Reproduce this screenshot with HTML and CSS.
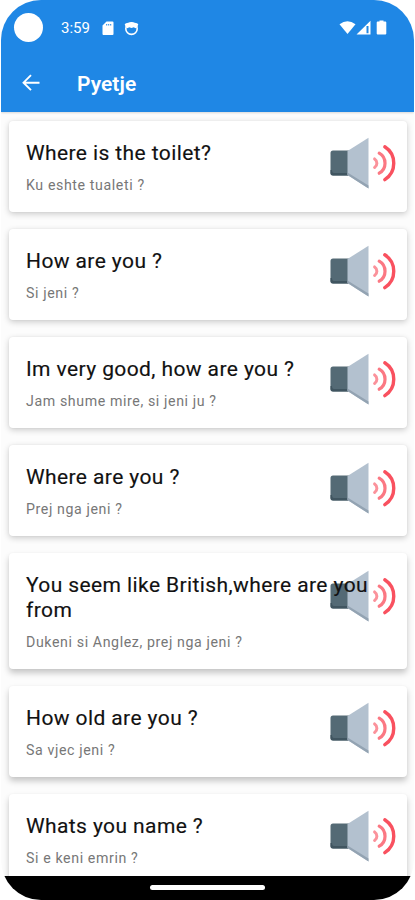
FILE: index.html
```html
<!DOCTYPE html>
<html lang="sq">
<head>
<meta charset="utf-8">
<title>Pyetje</title>
<link rel="stylesheet" href="styles.css">
</head>
<body>
<svg class="defs" width="0" height="0">
  <symbol id="speaker" viewBox="0 0 66 52">
    <path d="M3 13.5h16v25H3a2.500 2.500 0 0 1-2.500-2.500V16A2.500 2.500 0 0 1 3 13.500z" fill="#546a75"/>
    <path d="M.5 33v3A2.500 2.500 0 0 0 3 38.500h15V36H4q-2 0-2-3z" fill="#405560"/>
    <path d="M17.500 14 38.500.8V51.500L17.500 38z" fill="#b3c1cf"/>
    <path d="M17.500 35.500 38.500 48.500v3L17.500 38z" fill="#93a3b2"/>
    <g fill="none" stroke-linecap="round">
      <path d="M44.600 21.900a5.200 5.200 0 0 1 0 8.600" stroke="#fb929b" stroke-width="3"/>
      <path d="M49.200 16.200a11.500 11.500 0 0 1 0 20" stroke="#fb7883" stroke-width="3.200"/>
      <path d="M54.800 9.800a19.500 19.500 0 0 1 0 32.800" stroke="#f9515f" stroke-width="3.400"/>
    </g>
  </symbol>
</svg>
<div class="phone">
  <header class="top">
    <div class="status">
      <span class="camera"></span>
      <span class="time">3:59</span>
      <svg class="sd" width="12" height="15" viewBox="0 0 12 15"><path fill="#fff" fill-rule="evenodd" d="M4.500.5H10.500a1 1 0 0 1 1 1V13a1 1 0 0 1-1 1H1.500a1 1 0 0 1-1-1V4.500zM4.200 2.900v1.500h1V2.900zM6.200 2.900v1.500h1V2.900zM8.200 2.900v1.500h1V2.900z"/></svg>
      <svg class="face" width="15" height="15" viewBox="0 0 15 15"><circle cx="7.500" cy="7.700" r="5.700" fill="none" stroke="#fff" stroke-width="1.600"/><path d="M.7 3.200 2 2.200 7.500 1l5.500 1.200 1.300 1-1 2.500-1.800 1.500-1.700-1-2.300.8-2.300-.8-1.700 1L1.700 5.700z" fill="#fff"/></svg>
      <span class="spacer"></span>
      <svg width="50" height="16" viewBox="0 0 50 16"><path fill="#fff" d="M.5 4.200Q8.500-1.600 16.500 4.200L8.500 14z"/><path fill="#fff" d="M17.500 14.500 31.500.8v13.700zM27.500 6v7.200h2V6z" fill-rule="evenodd"/><path fill="#fff" d="M40.500 1.500V.5h4v1h1.800a1 1 0 0 1 1 1V13.500a1 1 0 0 1-1 1h-7.600a1 1 0 0 1-1-1V2.500a1 1 0 0 1 1-1z"/></svg>
    </div>
    <div class="bar">
      <svg width="20" height="18" viewBox="0 0 20 18"><path d="M18.500 8.700H2.500M10 1.200 2.500 8.700 10 16.200" fill="none" stroke="#fff" stroke-width="1.900"/></svg>
      <h1>Pyetje</h1>
    </div>
  </header>
  <main class="list">
    <article class="card"><h2>Where is the toilet?</h2><p>Ku eshte tualeti ?</p><svg class="speaker"><use href="#speaker"/></svg></article>
    <article class="card"><h2>How are you ?</h2><p>Si jeni ?</p><svg class="speaker"><use href="#speaker"/></svg></article>
    <article class="card"><h2>Im very good, how are you ?</h2><p>Jam shume mire, si jeni ju ?</p><svg class="speaker"><use href="#speaker"/></svg></article>
    <article class="card"><h2>Where are you ?</h2><p>Prej nga jeni ?</p><svg class="speaker"><use href="#speaker"/></svg></article>
    <article class="card raised"><h2>You seem like British,where are you from</h2><p>Dukeni si Anglez, prej nga jeni ?</p><svg class="speaker"><use href="#speaker"/></svg></article>
    <article class="card raised"><h2>How old are you ?</h2><p>Sa vjec jeni ?</p><svg class="speaker"><use href="#speaker"/></svg></article>
    <article class="card raised"><h2>Whats you name ?</h2><p>Si e keni emrin ?</p><svg class="speaker"><use href="#speaker"/></svg></article>
  </main>
  <footer class="nav"><span class="handle"></span></footer>
</div>
</body>
</html>
```
FILE: styles.css
```css
* { box-sizing: border-box; }
body { margin: 0; background: #fff; font-family: Roboto, sans-serif; }
.defs { display: block; }
.phone {
  display: flex;
  flex-direction: column;
  width: 413px;
  height: 900px;
  margin: 0 auto;
  border-radius: 40px;
  overflow: hidden;
  background: #fcfcfc;
}
.top {
  flex: none;
  height: 112px;
  background: #1f87e5;
  color: #fff;
  box-shadow: 0 1px 2px rgba(0, 0, 0, .15);
}
.status { display: flex; align-items: center; height: 56px; padding: 0 25px 0 13px; }
.camera { width: 29px; height: 29px; border-radius: 50%; background: #fff; margin-top: -2px; }
.time { margin-left: 18px; width: 41px; font-size: 15px; line-height: 18px; }
.face { margin-left: 10px; }
.spacer { flex: 1; }
.bar { display: flex; align-items: center; height: 54px; padding-left: 20px; }
h1 { margin: 2px 0 0 36px; font-size: 21px; line-height: 26px; font-weight: 600; letter-spacing: .05px; }
.list {
  flex: 1;
  min-height: 0;
  overflow: hidden;
  display: flex;
  flex-direction: column;
  gap: 17px;
  padding: 8.500px 7px 0 8px;
}
.card {
  position: relative;
  flex: none;
  min-height: 91.200px;
  padding: 20px 13px 17.700px 17px;
  border-radius: 4px;
  background: #fff;
  box-shadow: 0 2px 6px rgba(0, 0, 0, .2), 0 0 2px rgba(0, 0, 0, .05);
}
.card.raised { box-shadow: 0 4px 6px rgba(0, 0, 0, .22), 0 0 2px rgba(0, 0, 0, .04); }
h2, p { position: relative; z-index: 1; margin: 0; font-weight: 400; }
h2 { font-size: 21px; line-height: 24.300px; letter-spacing: .4px; color: #111; -webkit-text-stroke: .15px #111; }
p { margin-top: 12px; font-size: 14.200px; line-height: 17px; letter-spacing: .6px; color: #777; }
.speaker { position: absolute; right: 11px; top: 16.500px; width: 66px; height: 52px; }
.nav { position: relative; z-index: 2; flex: none; height: 24px; background: #000; display: flex; justify-content: center; padding-top: 9px; }
.handle { width: 115px; height: 5px; border-radius: 3px; background: #fff; }
```
